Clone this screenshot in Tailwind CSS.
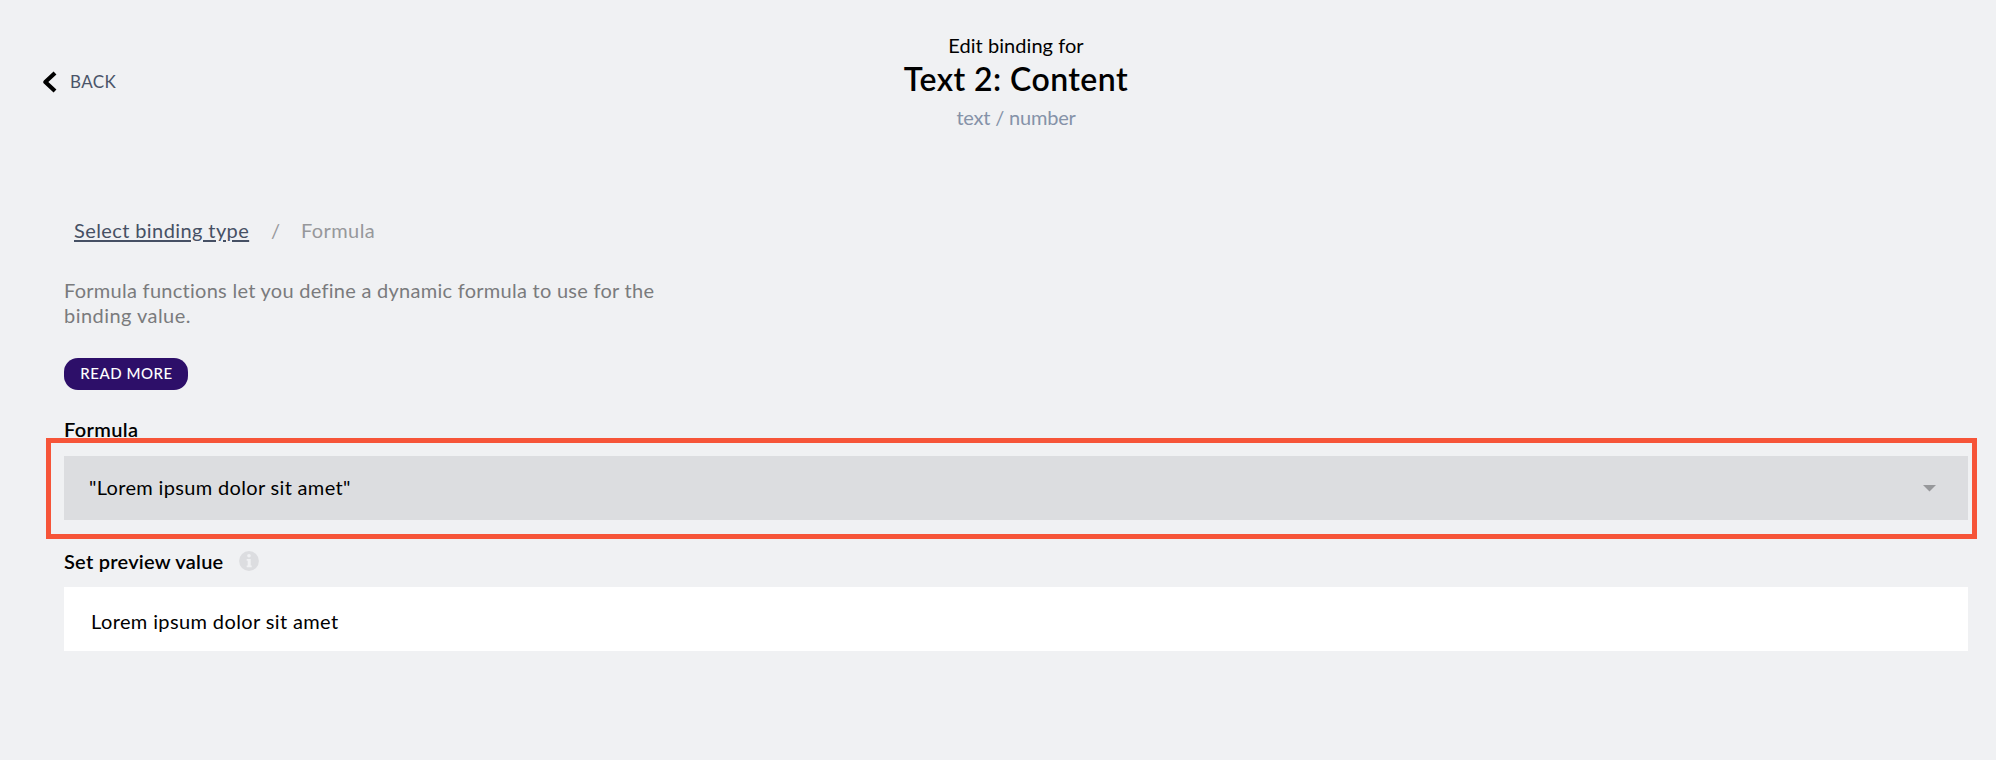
<!DOCTYPE html>
<html lang="en">
<head>
<meta charset="utf-8">
<title>Edit binding for Text 2: Content</title>
<script src="https://cdn.jsdelivr.net/npm/@tailwindcss/browser@4"></script>
</head>
<body class="h-[760px] overflow-hidden bg-[#f0f1f3] pr-7 pl-16 font-['Lato','Open_Sans',sans-serif] text-xl leading-6 text-black">
  <header class="relative flex h-[220px] flex-col items-center pt-[33px]">
    <button class="absolute top-[70px] -left-[22px] flex h-6 items-center text-[17px] tracking-[0.4px] text-[#4a5468]">
      <svg class="mr-[12px] h-6 w-4" viewBox="0 0 16 24" fill="none" stroke="#000" stroke-width="4.2"><path d="M13 3 3.3 12l9.7 9" stroke-linejoin="round" stroke-linecap="butt"/></svg>
      BACK
    </button>
    <p class="tracking-[0.05px]">Edit binding for</p>
    <h1 class="mt-0.5 text-[32px] leading-10 font-semibold tracking-[0.45px]">Text 2: Content</h1>
    <p class="mt-1.5 tracking-[-0.2px] text-[#8592a8]">text / number</p>
  </header>

  <main>
    <nav class="flex h-6 pl-2.5 -mt-0.5">
      <a class="w-[197px] tracking-[0.4px] text-[#465064] underline decoration-2 underline-offset-2">Select binding type</a>
      <span class="w-[30px] text-[#97989b]">/</span>
      <span class="tracking-[0.4px] text-[#97989b]">Formula</span>
    </nav>

    <p class="mt-[36px] w-[620px] leading-[25px] tracking-[0.27px] text-[#7a7b7d]">Formula functions let you define a dynamic formula to use for the<br><span class="tracking-[0.45px]">binding value.</span></p>

    <button class="mt-[30px] flex h-8 w-[124px] items-center justify-center rounded-[14px] bg-[#2d0f69] pb-[3px] pl-px text-[15px] font-medium tracking-[0.55px] text-white">READ MORE</button>

    <label class="mt-[27px] block h-[21px] leading-6 font-semibold tracking-[0.35px]">Formula</label>

    <div class="-mr-[9px] -ml-[18px] h-[101px] border-5 border-[#f65438] py-[13px] pr-1 pl-[13px]">
      <div class="flex h-16 items-center justify-between bg-[#dcdde0] pr-8 pl-[25px]">
        <span class="pb-0.5 tracking-[0.33px]">"Lorem ipsum dolor sit amet"</span>
        <svg class="h-[7px] w-[13px]" viewBox="0 0 13 7"><path d="M0 0h13L6.5 6.5z" fill="#97989b"/></svg>
      </div>
    </div>

    <div class="mt-2.5 flex h-6 items-center">
      <label class="w-[175px] font-semibold tracking-[0.25px]">Set preview value</label>
      <svg class="h-5 w-5" viewBox="0 0 20 20"><circle cx="10" cy="10" r="9.9" fill="#dcdde0"/><g fill="#f0f1f3"><circle cx="10" cy="4.7" r="1.8"/><path d="M7.7 8h4v6.5h1v1.7h-5v-1.7h1V9.7h-1z"/></g></svg>
    </div>

    <div class="mt-3.5 flex h-16 items-center bg-white pt-1 pl-[27px]">
      <span class="tracking-[0.38px]">Lorem ipsum dolor sit amet</span>
    </div>
  </main>
</body>
</html>
